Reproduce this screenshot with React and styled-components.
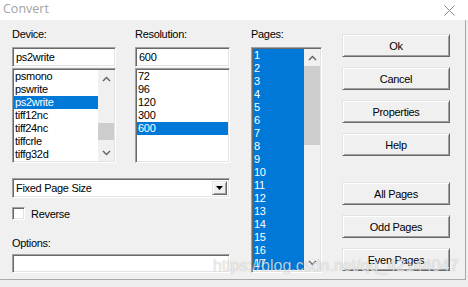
import React from "react";
import styled, { createGlobalStyle } from "styled-components";

const GlobalStyle = createGlobalStyle`
  html, body { margin: 0; padding: 0; background: #eeeeee; }
  * { box-sizing: border-box; }
`;

const Screen = styled.div`
  position: relative;
  width: 468px;
  height: 287px;
  overflow: hidden;
  background: #eeeeee;
  font-family: "Liberation Sans", Arial, sans-serif;
  font-size: 11px;
  letter-spacing: -0.3px;
  color: #000;
`;

const TitleBar = styled.div`
  height: 20px;
  background: #fff;
  display: flex;
  align-items: center;
  justify-content: space-between;
  padding: 0 13px 0 3px;
`;

const Title = styled.span`
  font-family: "Open Sans", "Noto Sans", sans-serif;
  font-size: 12.5px;
  letter-spacing: 0;
  color: #a3a3a3;
  line-height: 20px;
  margin-top: -2px;
`;

const Dialog = styled.div`
  width: 466px;
  height: 260px;
  background: #f0f0f0;
  border-right: 1px solid #a9a9a9;
  border-bottom: 1px solid #a9a9a9;
  display: flex;
  padding: 8px 0 0 12px;
`;

const LeftPane = styled.div`
  width: 218px;
  display: flex;
  flex-direction: column;
`;

const TopRow = styled.div`
  display: flex;
  gap: 19px;
`;

const FieldColumn = styled.div`
  width: ${(p) => p.$w}px;
  margin-left: ${(p) => p.$ml || 0}px;
  display: flex;
  flex-direction: column;
`;

const Label = styled.div`
  height: 13px;
  line-height: 13px;
  margin-bottom: ${(p) => p.$mb}px;
  margin-top: ${(p) => p.$mt || 0}px;
  white-space: nowrap;
`;

const sunken = `
  border: 1px solid;
  border-color: #a0a0a0 #ffffff #ffffff #a0a0a0;
  box-shadow: inset 1px 1px 0 #696969, inset -1px -1px 0 #e3e3e3;
`;

const TextBox = styled.div`
  ${sunken}
  height: ${(p) => p.$h}px;
  background: #fff;
  padding: 0 3px;
  line-height: ${(p) => p.$h - 2}px;
  margin-bottom: ${(p) => p.$mb || 0}px;
  white-space: nowrap;
`;

const ListBox = styled.div`
  ${sunken}
  height: ${(p) => p.$h}px;
  background: #fff;
  padding: 1px;
  display: flex;
  overflow: hidden;
`;

const Items = styled.div`
  flex: 1;
  min-width: 0;
  overflow: hidden;
`;

const Item = styled.div`
  height: 13px;
  line-height: 13px;
  padding-left: 1px;
  white-space: nowrap;
  background: ${(p) => (p.$sel ? "#0078d7" : "transparent")};
  color: ${(p) => (p.$sel ? "#fff" : "#000")};
`;

const ScrollBar = styled.div`
  width: 16px;
  background: #f0f0f0;
  display: flex;
  flex-direction: column;
`;

const ScrollArrow = styled.div`
  height: 17px;
  display: flex;
  align-items: center;
  justify-content: center;
  flex: none;
`;

const Track = styled.div`
  flex: 1;
  position: relative;
`;

const Thumb = styled.div`
  position: absolute;
  left: 0;
  right: 0;
  top: ${(p) => p.$top}px;
  height: ${(p) => p.$h}px;
  background: #cdcdcd;
`;

const Chevron = ({ up }) => (
  <svg width="9" height="6" viewBox="0 0 9 6">
    <path
      d={up ? "M1 5 L4.5 1.5 L8 5" : "M1 1 L4.5 4.5 L8 1"}
      fill="none"
      stroke="#606060"
      strokeWidth="1.4"
    />
  </svg>
);

const ComboBox = styled.div`
  ${sunken}
  height: 20px;
  margin-top: 15px;
  background: #fff;
  display: flex;
  align-items: center;
  padding: 2px 2px 2px 3px;
`;

const ComboText = styled.span`
  flex: 1;
  white-space: nowrap;
`;

const raised = `
  border: 1px solid;
  border-color: #e3e3e3 #696969 #696969 #e3e3e3;
  box-shadow: inset 1px 1px 0 #ffffff, inset -1px -1px 0 #a0a0a0;
  background: #f0f0f0;
`;

const DropButton = styled.div`
  ${raised}
  width: 15px;
  height: 14px;
  display: flex;
  align-items: center;
  justify-content: center;
`;

const CheckRow = styled.label`
  display: flex;
  align-items: center;
  gap: 6px;
  margin-top: 9px;
  height: 13px;
`;

const CheckBox = styled.span`
  ${sunken}
  width: 13px;
  height: 13px;
  background: #fff;
  flex: none;
`;

const ButtonColumn = styled.div`
  width: 108px;
  margin-left: 20px;
  padding-top: 6px;
  display: flex;
  flex-direction: column;
  gap: 10px;
`;

const Button = styled.div`
  ${raised}
  height: 23px;
  display: flex;
  align-items: center;
  justify-content: center;
  margin-top: ${(p) => p.$mt || 0}px;
  white-space: nowrap;
`;

const Watermark = styled.div`
  position: absolute;
  left: 213px;
  top: 258px;
  font-size: 16px;
  line-height: 16px;
  letter-spacing: 0;
  color: rgba(255, 255, 255, 0.72);
  text-shadow: 0 0 1px rgba(0, 0, 0, 0.3);
  white-space: nowrap;
  pointer-events: none;
`;

const devices = ["psmono", "pswrite", "ps2write", "tiff12nc", "tiff24nc", "tiffcrle", "tiffg32d"];
const resolutions = ["72", "96", "120", "300", "600"];
const pages = Array.from({ length: 17 }, (_, i) => String(i + 1));

export default function App() {
  return (
    <>
      <GlobalStyle />
      <Screen>
        <TitleBar>
          <Title>Convert</Title>
          <svg width="11" height="11" viewBox="0 0 11 11">
            <path d="M0.5 0.5 L10.5 10.5 M10.5 0.5 L0.5 10.5" stroke="#8a8a8a" strokeWidth="1" />
          </svg>
        </TitleBar>
        <Dialog>
          <LeftPane>
            <TopRow>
              <FieldColumn $w={104}>
                <Label $mb={6}>Device:</Label>
                <TextBox $h={20} $mb={1}>ps2write</TextBox>
                <ListBox $h={95}>
                  <Items>
                    {devices.map((d) => (
                      <Item key={d} $sel={d === "ps2write"}>{d}</Item>
                    ))}
                  </Items>
                  <ScrollBar>
                    <ScrollArrow><Chevron up /></ScrollArrow>
                    <Track><Thumb $top={36} $h={17} /></Track>
                    <ScrollArrow><Chevron /></ScrollArrow>
                  </ScrollBar>
                </ListBox>
              </FieldColumn>
              <FieldColumn $w={95}>
                <Label $mb={6}>Resolution:</Label>
                <TextBox $h={20} $mb={1}>600</TextBox>
                <ListBox $h={95}>
                  <Items>
                    {resolutions.map((r) => (
                      <Item key={r} $sel={r === "600"}>{r}</Item>
                    ))}
                  </Items>
                </ListBox>
              </FieldColumn>
            </TopRow>
            <ComboBox>
              <ComboText>Fixed Page Size</ComboText>
              <DropButton>
                <svg width="7" height="4" viewBox="0 0 7 4">
                  <path d="M0 0 H7 L3.5 4 Z" fill="#000" />
                </svg>
              </DropButton>
            </ComboBox>
            <CheckRow>
              <CheckBox />
              <span>Reverse</span>
            </CheckRow>
            <Label $mt={17} $mb={4}>Options:</Label>
            <TextBox $h={19} />
          </LeftPane>
          <FieldColumn $w={71} $ml={21}>
            <Label $mb={6}>Pages:</Label>
            <ListBox $h={226}>
              <Items>
                {pages.map((p) => (
                  <Item key={p} $sel>{p}</Item>
                ))}
              </Items>
              <ScrollBar>
                <ScrollArrow><Chevron up /></ScrollArrow>
                <Track><Thumb $top={0} $h={79} /></Track>
                <ScrollArrow><Chevron /></ScrollArrow>
              </ScrollBar>
            </ListBox>
          </FieldColumn>
          <ButtonColumn>
            <Button>Ok</Button>
            <Button>Cancel</Button>
            <Button>Properties</Button>
            <Button>Help</Button>
            <Button $mt={16}>All Pages</Button>
            <Button>Odd Pages</Button>
            <Button>Even Pages</Button>
          </ButtonColumn>
        </Dialog>
        <Watermark>https://blog.csdn.net/qq_42144047</Watermark>
      </Screen>
    </>
  );
}
